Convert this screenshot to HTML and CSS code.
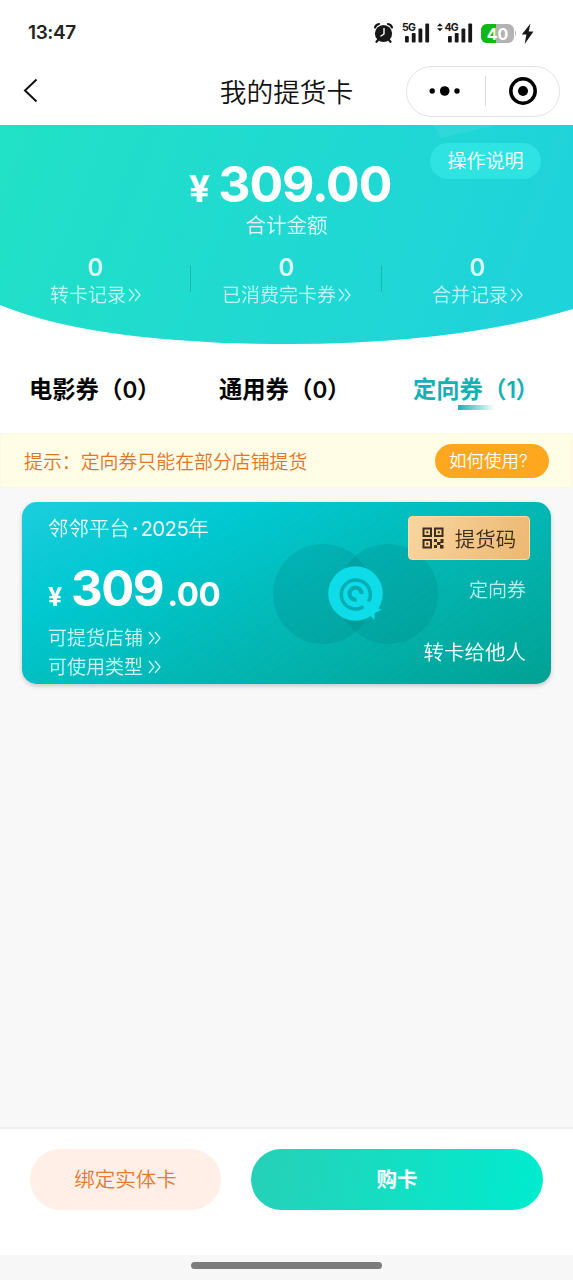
FILE: index.html
```html
<!DOCTYPE html>
<html lang="zh-CN">
<head>
<meta charset="utf-8">
<title>我的提货卡</title>
<link rel="stylesheet" href="styles.css">
</head>
<body>
<div class="screen">
  <div class="status">
    <span class="time">13:47</span>
    <svg class="status-icons" width="166" height="28" viewBox="0 0 166 28">
      <g fill="none" stroke="#171717" stroke-width="2.2" stroke-linecap="round">
        <path d="M2 7.500Q3 4.500 6 4M19 7.500Q18 4.500 15 4M5 20l-1.500 1.800M16 20l1.500 1.800"/>
      </g>
      <circle cx="10.500" cy="13.500" r="8.600" fill="#171717"/>
      <path d="M11 8.500V14L8 16" fill="none" stroke="#fff" stroke-width="1.400" stroke-linecap="round"/>
      <g fill="#171717">
        <rect x="32" y="16" width="3.800" height="6.500" rx="1"/><rect x="38.800" y="13" width="3.800" height="9.500" rx="1"/><rect x="45.500" y="8.500" width="3.800" height="14" rx="1"/><rect x="52.300" y="3.500" width="3.800" height="19" rx="1"/>
        <rect x="75" y="16" width="3.800" height="6.500" rx="1"/><rect x="81.800" y="13" width="3.800" height="9.500" rx="1"/><rect x="88.500" y="8.500" width="3.800" height="14" rx="1"/><rect x="95.300" y="3.500" width="3.800" height="19" rx="1"/>
        <path d="M64 6.300l2.900-3 2.900 3zM64 8.300l2.900 3 2.900-3z"/>
        <text x="29" y="11.300" class="net">5G</text><text x="71.500" y="11.300" class="net">4G</text>
        <path d="M157.500 3.500l-8.700 11h4.600l-1.700 9.500 8.800-12.500h-4.800z"/>
      </g>
      <clipPath id="bat"><rect x="108" y="4" width="33" height="19" rx="6"/></clipPath>
      <g clip-path="url(#bat)"><rect x="108" y="4" width="33" height="19" fill="#b3b3b3"/><rect x="108" y="4" width="15" height="19" fill="#10b817"/></g>
      <path d="M142 10q2 3.500 0 7z" fill="#b3b3b3"/>
      <text x="124.500" y="19.500" text-anchor="middle" class="level" fill="#fff">40</text>
    </svg>
  </div>
  <div class="nav">
    <svg class="back" width="16" height="26" viewBox="0 0 16 26"><path d="M13.500 1.500L2 12.500l11.500 11" fill="none" stroke="#111" stroke-width="2"/></svg>
    <div class="title">我的提货卡</div>
    <div class="capsule">
      <svg width="32" height="12" viewBox="0 0 32 12"><circle cx="3.200" cy="6" r="2.700"/><circle cx="15.700" cy="6" r="4.800"/><circle cx="28" cy="6" r="2.700"/></svg>
      <i class="capsule-line"></i>
      <svg width="28" height="28" viewBox="0 0 28 28"><circle cx="14" cy="14" r="12.200" fill="none" stroke="#000" stroke-width="3.500"/><circle cx="14" cy="14" r="5"/></svg>
    </div>
  </div>

  <div class="hero">
    <svg class="hero-bg" width="573" height="219" viewBox="0 0 573 219">
      <defs><linearGradient id="hg" x1="0" y1="0" x2="1" y2=".15"><stop offset="0" stop-color="#21e1c6"/><stop offset="1" stop-color="#1fd3da"/></linearGradient></defs>
      <path d="M0 0H573V184Q455 219 290 219Q95 219 0 180Z" fill="url(#hg)"/>
      <path d="M434 0L441 13L497 0Z" fill="#fff" opacity=".07"/>
    </svg>
    <span class="guide">操作说明</span>
    <div class="total"><span class="yen">¥</span><span class="sum">309.00</span></div>
    <div class="total-label">合计金额</div>
    <div class="stats">
      <div class="stat"><b>0</b><span>转卡记录<svg class="chev" width="13" height="14" viewBox="0 0 13 14"><path d="M1 1l5 6-5 6M7 1l5 6-5 6"/></svg></span></div>
      <div class="stat"><b>0</b><span>已消费完卡券<svg class="chev" width="13" height="14" viewBox="0 0 13 14"><path d="M1 1l5 6-5 6M7 1l5 6-5 6"/></svg></span></div>
      <div class="stat"><b>0</b><span>合并记录<svg class="chev" width="13" height="14" viewBox="0 0 13 14"><path d="M1 1l5 6-5 6M7 1l5 6-5 6"/></svg></span></div>
    </div>
  </div>

  <div class="tabs">
    <span class="tab">电影券<span class="count">（<b>0</b>）</span></span>
    <span class="tab">通用券<span class="count">（<b>0</b>）</span></span>
    <span class="tab active">定向券<span class="count">（<b>1</b>）</span></span>
  </div>

  <div class="notice"><span>提示：定向券只能在部分店铺提货</span><span class="how">如何使用?</span></div>

  <div class="content">
    <div class="card">
      <svg class="card-art" width="166" height="102" viewBox="0 0 166 102">
        <circle cx="50" cy="51" r="50" fill="#006b70" opacity=".17"/><circle cx="115" cy="51" r="50" fill="#006b70" opacity=".17"/>
        <circle cx="82.500" cy="50.500" r="27.300" fill="#0edce8"/>
        <path d="M92 71l4 .5 5.500 5.500.2-7 7.300-3.500-6-1.500 1-6z" fill="#0edce8"/>
        <g fill="none" stroke="#05aeb3">
          <path stroke-width="3.500" d="M90.500 63.800A14.500 14.500 0 1 1 95.500 58.500"/>
          <path stroke-width="4.200" d="M83.500 56.500A6 6 0 1 1 88.500 51"/>
        </g>
      </svg>
      <div class="card-left">
        <div class="card-name">邻邻平台<i class="dot">·</i><span class="year">2025</span>年</div>
        <div class="amount"><span class="card-yen">¥</span><span class="int">309</span><span class="dec">.00</span></div>
        <div class="link">可提货店铺<svg class="chev" width="13" height="14" viewBox="0 0 13 14"><path d="M1 1l5 6-5 6M7 1l5 6-5 6"/></svg></div>
        <div class="link">可使用类型<svg class="chev" width="13" height="14" viewBox="0 0 13 14"><path d="M1 1l5 6-5 6M7 1l5 6-5 6"/></svg></div>
      </div>
      <div class="card-right">
        <div class="code">
          <svg width="22" height="22" viewBox="0 0 22 22"><g fill="none" stroke="#3c2c1c" stroke-width="2"><rect x="1.500" y="1.500" width="7.500" height="7.500"/><rect x="13" y="1.500" width="7.500" height="7.500"/><rect x="1.500" y="13" width="7.500" height="7.500"/></g><g fill="#3c2c1c"><path d="M4.300 4.300h2v2h-2zM15.800 4.300h2v2h-2zM4.300 15.800h2v2h-2zM12 12h3v3h-3zM18.500 12H21.500v4H18.500zM15 15h3.500v3H15zM12 18h3v3h-3zM18 18h3.500v3.500H18z"/></g></svg>
          <span>提货码</span>
        </div>
        <div class="kind">定向券</div>
        <div class="give">转卡给他人</div>
      </div>
    </div>
  </div>

  <div class="actions"><span class="btn bind">绑定实体卡</span><span class="btn buy">购卡</span></div>
  <div class="home"><i></i></div>
</div>
</body>
</html>
```
FILE: styles.css
```css
* { box-sizing: border-box; }
body { margin: 0; font-family: Inter, "Noto Sans CJK SC", sans-serif; font-weight: 350; color: #111; }
i { font-style: normal; }
svg { display: block; flex: none; }
.screen { width: 573px; height: 1280px; display: flex; flex-direction: column; background: #f8f8f8; overflow: hidden; }
.status { height: 58px; padding: 20px 34px 0 28px; display: flex; justify-content: space-between; background: #fff; }
.time { font-size: 19px; line-height: 26px; font-weight: 600; color: #222; letter-spacing: -.4px; }
.net { font: 700 10.500px Inter, sans-serif; letter-spacing: -.8px; }
.level { font: 700 16px Inter, sans-serif; }
.nav { height: 67px; display: grid; grid-template-columns: 200px 1fr 200px; align-items: center; background: #fff; padding-bottom: 1px; }
.back { margin-left: 23px; }
.title { text-align: center; font-size: 26.700px; line-height: 40px; white-space: nowrap; padding-top: 2px; }
.capsule { width: 154px; height: 51px; margin-left: 33px; border: 1px solid #e3e3e3; border-radius: 26px; display: flex; align-items: center; padding: 0 22px; justify-content: space-between; }
.capsule-line { width: 1px; height: 30px; background: #dcdcdc; }
.hero { height: 219px; position: relative; background: #fff; color: #fff; padding-top: 31px; }
.hero-bg { position: absolute; left: 0; top: 0; }
.hero > div { position: relative; }
.guide { position: absolute; right: 32px; top: 18px; width: 111px; height: 36px; border-radius: 18px; background: #2fe3e2; text-align: center; font-size: 19px; line-height: 37px; }
.total { height: 56px; display: flex; justify-content: center; align-items: baseline; gap: 9px; padding-left: 7px; font-weight: 700; }
.yen { font-size: 37px; letter-spacing: -.5px; }
.sum { font-size: 50px; line-height: 56px; letter-spacing: -1.100px; }
.total-label { text-align: center; font-size: 20.500px; line-height: 28px; opacity: .85; }
.stats { display: grid; grid-template-columns: repeat(3, 1fr); margin-top: 14px; }
.stat { display: flex; flex-direction: column; align-items: center; position: relative; }
.stat + .stat::before { content: ""; position: absolute; left: -1px; top: 12px; width: 1px; height: 26px; background: #16b9b0; }
.stat b { font-size: 24px; font-weight: 600; line-height: 28px; opacity: .85; }
.stat span { display: flex; align-items: center; gap: 2px; font-size: 19px; line-height: 28px; opacity: .72; white-space: nowrap; }
.chev { fill: none; stroke: #fff; stroke-width: 1.200; }
.stat .chev { margin-top: -2px; }
.tabs { height: 89px; background: #fff; display: grid; grid-template-columns: 190px 190px 193px; padding-top: 27px; }
.tab { display: flex; font-family: "Noto Sans CJK SC", sans-serif; font-size: 23.300px; line-height: 34px; font-weight: 700; color: #050505; padding-left: 29px; position: relative; white-space: nowrap; }
.count { margin-left: 12px; font-feature-settings: "halt"; }
.count b { font-family: Inter, sans-serif; font-size: 22.500px; font-weight: 600; letter-spacing: -.5px; }
.tab.active { color: #14b0b4; padding-left: 33px; }
.active::after { content: ""; position: absolute; left: 78px; top: 34px; width: 37px; height: 5px; background: linear-gradient(90deg, #18b1b3, #fff); }
.notice { height: 55px; padding: 0 23px; display: flex; align-items: center; justify-content: space-between; background: #fffde5; border: 1px solid #fff8df; border-radius: 5px; font-size: 18.900px; color: #e07628; }
.how { width: 114px; height: 34px; border-radius: 17px; background: #ffa81f; color: #fff; font-size: 17.500px; line-height: 34px; padding-left: 14px; }
.content { flex: 1; padding: 14px 22px; filter: drop-shadow(0 2px 2px rgba(0,0,0,.2)); }
.card { position: relative; height: 182px; border-radius: 15px; overflow: hidden; display: flex; justify-content: space-between; padding: 0 21px 0 26px; color: #fff; background: repeating-linear-gradient(142deg, transparent 0 4px, rgba(255,255,255,.012) 6px 7px, transparent 8px), linear-gradient(155deg, #1ccddd 0%, #00c8d0 27%, #02b6b2 60%, #00a193 100%); }
.card-art { position: absolute; left: 251px; top: 41px; }
.card-left, .card-right { position: relative; }
.card-name { margin-top: 12px; height: 30px; font-size: 20.500px; line-height: 30px; opacity: .9; }
.dot { margin: 0 2px; font-weight: 600; }
.year { letter-spacing: -.7px; font-weight: 400; }
.amount { margin-top: 20px; height: 50px; display: flex; align-items: baseline; font-weight: 700; }
.card-yen { width: 23px; font-size: 25px; }
.int { font-size: 49px; line-height: 50px; letter-spacing: -1.400px; }
.dec { font-size: 33px; margin-left: 4px; letter-spacing: -.5px; }
.link { display: flex; align-items: center; gap: 5px; font-size: 19px; line-height: 29px; opacity: .82; }
.link .chev { margin-top: -2px; }
.amount + .link { margin-top: 10px; }
.card-right { display: flex; flex-direction: column; align-items: flex-end; }
.code { margin-top: 14px; width: 122px; height: 44px; border: 1px solid #ffdc9f; border-radius: 4px; display: flex; align-items: center; justify-content: center; gap: 11px; background: linear-gradient(110deg, #f8d5a0, #edb872); color: #3c2c1c; font-size: 20.500px; }
.kind { margin: 16px 4px 0 0; font-size: 19px; line-height: 30px; opacity: .75; }
.give { margin: 31px 4px 0 0; font-size: 20.500px; line-height: 31px; }
.actions { height: 128px; border-top: 2px solid #efefef; background: #fff; display: flex; gap: 30px; padding: 20px 30px 0; }
.btn { height: 61px; border-radius: 31px; line-height: 62px; text-align: center; font-size: 20.500px; }
.bind { width: 191px; background: #ffefe6; color: #e77a31; }
.buy { width: 292px; background: linear-gradient(100deg, #27d0b7, #00eccf); color: #fff; font-weight: 700; }
.home { height: 25px; background: #f7f7f7; display: flex; justify-content: center; padding-top: 7px; }
.home i { width: 191px; height: 7px; border-radius: 4px; background: #7c7c7c; }
```
